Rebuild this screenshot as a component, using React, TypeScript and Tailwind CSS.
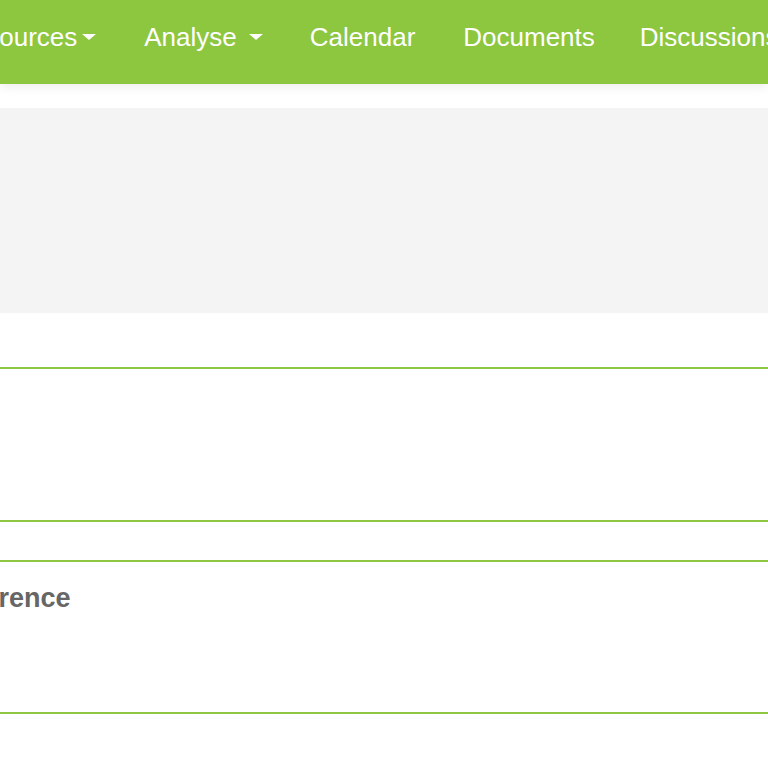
import React from "react";

function Caret() {
  return <span className="inline-block w-0 h-0 border-x-[7px] border-t-[6px] border-x-transparent border-t-white" />;
}

export default function App() {
  return (
    <div className="min-h-[768px] bg-white overflow-hidden" style={{ fontFamily: '"Liberation Sans", Arial, sans-serif' }}>
      <nav className="h-[84px] bg-[#8dc63f] flex items-center shadow-[0_3px_10px_rgba(0,0,0,0.07)] relative">
        <ul className="flex items-center ml-[-47px] mb-[10px] text-white text-[26px] whitespace-nowrap">
          <li className="flex items-center gap-[5px]"><span>Resources</span><Caret /></li>
          <li className="flex items-center gap-[12px] ml-[48px]"><span>Analyse</span><Caret /></li>
          <li className="ml-[47px]">Calendar</li>
          <li className="ml-[48px]">Documents</li>
          <li className="ml-[45px]">Discussions</li>
        </ul>
      </nav>
      <div className="mt-[24px] h-[205px] bg-[#f4f4f4]" />
      <div className="mt-[54px] h-[155px] border-y-2 border-[#8fc641]" />
      <div className="mt-[38px] h-[154px] border-y-2 border-[#8fc641] overflow-hidden">
        <h2 className="ml-[-78px] mt-[16px] text-[27px] font-bold text-[#666666] whitespace-nowrap">Conference</h2>
      </div>
    </div>
  );
}
